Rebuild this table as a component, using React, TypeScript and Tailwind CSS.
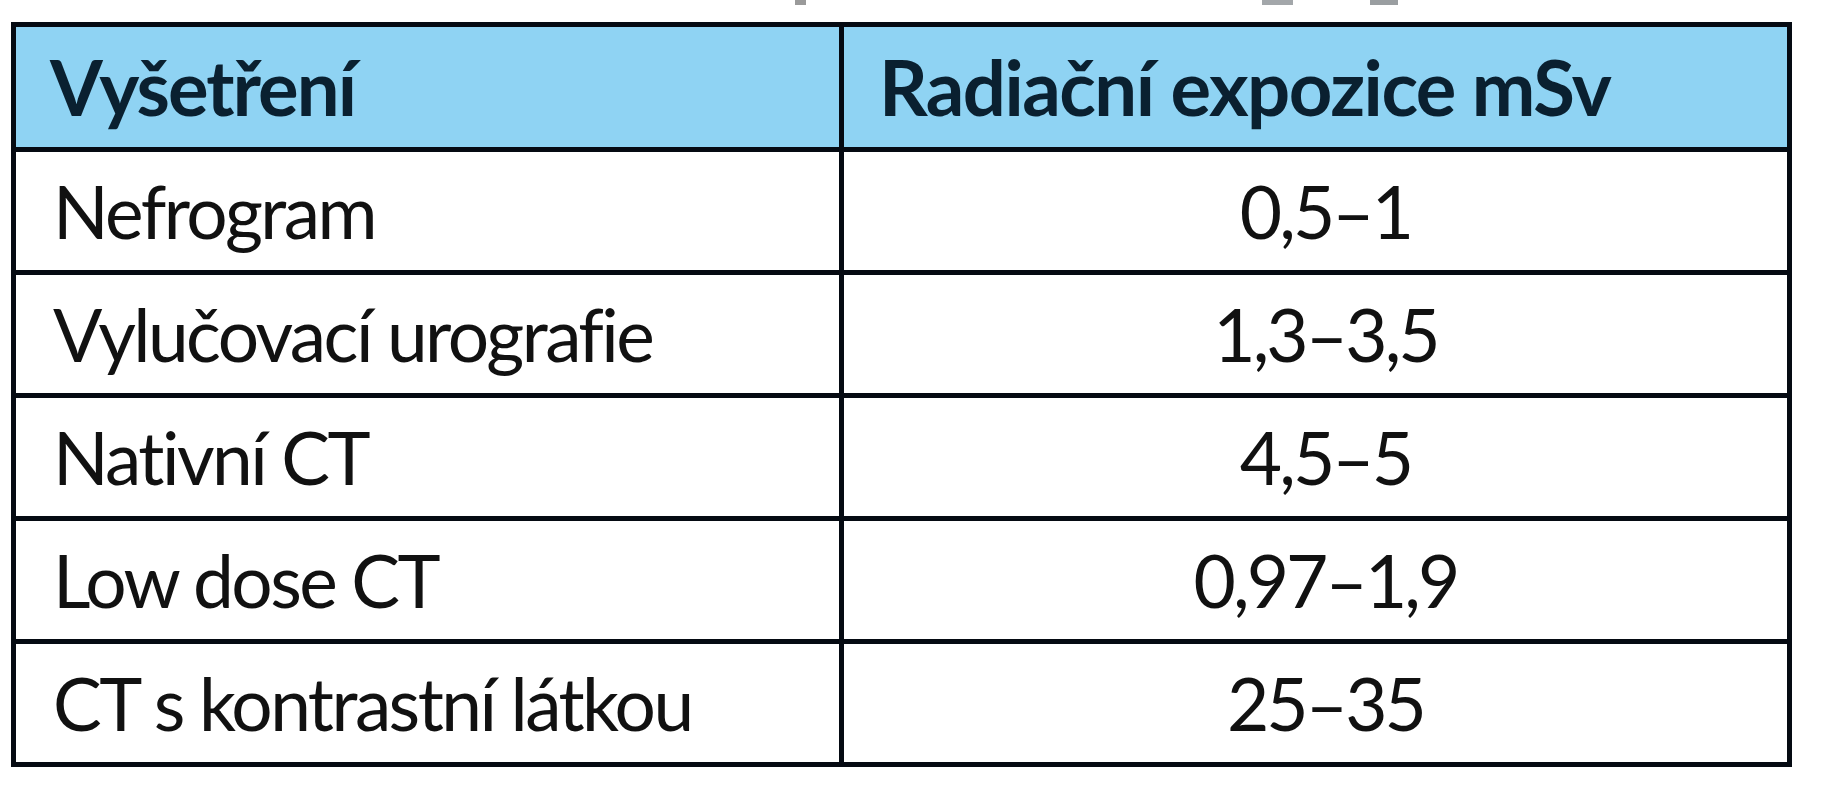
import React from 'react';

type Row = { name: string; dose: string };

const rows: Row[] = [
    { name: 'Nefrogram', dose: '0,5–1' },
    { name: 'Vylučovací urografie', dose: '1,3–3,5' },
    { name: 'Nativní CT', dose: '4,5–5' },
    { name: 'Low dose CT', dose: '0,97–1,9' },
    { name: 'CT s kontrastní látkou', dose: '25–35' },
];

const font = { fontFamily: 'Lato, "Open Sans", "Liberation Sans", sans-serif' };

export default function App() {
    return (
        <div className="h-[800px] w-[1836px] overflow-hidden bg-white" style={font}>
            {/* cut-off caption, only descender tips visible */}
            <div className="flex h-[22px] items-start">
                <span className="ml-[795px] h-[5px] w-[11px] bg-[#9a9a9a]" />
                <span className="ml-[456px] h-[5px] w-[31px] bg-[#a3a7aa]" />
                <span className="ml-[77px] h-[5px] w-[28px] bg-[#9a9ea1]" />
            </div>

            <div className="ml-[11px] w-[1781px] border-[5px] border-[#050a12]">
                {/* Header */}
                <div className="grid h-[125px] grid-cols-[828px_1fr] border-b-[5px] border-[#050a12] bg-[#8fd3f3] text-[#0a2030]">
                    <div className="flex items-center border-r-[5px] border-[#050a12] pl-[34px]">
                        <span className="text-[76px] font-bold leading-none tracking-[-0.025em]">Vyšetření</span>
                    </div>
                    <div className="flex items-center pl-[35px]">
                        <span className="text-[76px] font-bold leading-none tracking-[-0.02em]">Radiační expozice mSv</span>
                    </div>
                </div>

                {/* Body rows */}
                {rows.map((r, i) => (
                    <div
                        key={r.name}
                        className={
                            i === rows.length - 1
                                ? 'grid h-[118px] grid-cols-[828px_1fr] text-[#111111]'
                                : 'grid h-[123px] grid-cols-[828px_1fr] border-b-[5px] border-[#050a12] text-[#111111]'
                        }
                    >
                        <div className="flex items-center border-r-[5px] border-[#050a12] pl-[37px]">
                            <span className="text-[73px] font-normal leading-none tracking-[-0.035em]">{r.name}</span>
                        </div>
                        <div className="flex items-center justify-center pl-[20px]">
                            <span className="text-[73px] font-normal leading-none tracking-[-0.04em]">{r.dose}</span>
                        </div>
                    </div>
                ))}
            </div>
        </div>
    );
}
